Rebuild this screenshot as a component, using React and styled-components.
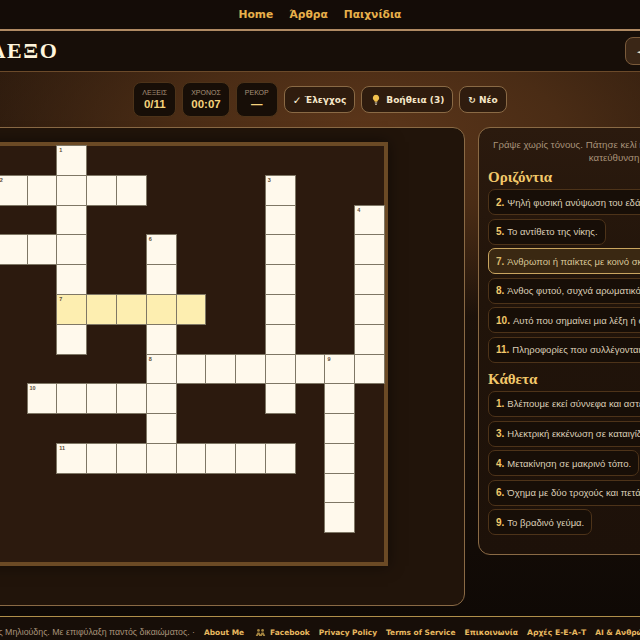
import React from 'react';
import styled, { createGlobalStyle } from 'styled-components';

const GlobalStyle = createGlobalStyle`
html, body { margin: 0; padding: 0; background: #140c07; overflow: hidden; }
body { width: 640px; height: 640px; font-family: "Liberation Sans", Arial, sans-serif; }
`

const ACROSS = [
    { n: 2, text: 'Ψηλή φυσική ανύψωση του εδάφους.' },
    { n: 5, text: 'Το αντίθετο της νίκης.' },
    { n: 7, text: 'Άνθρωποι ή παίκτες με κοινό σκοπό.', active: true },
    { n: 8, text: 'Άνθος φυτού, συχνά αρωματικό και πολύχρωμο.' },
    { n: 10, text: 'Αυτό που σημαίνει μια λέξη ή φράση στο λόγο.' },
    { n: 11, text: 'Πληροφορίες που συλλέγονται για ανάλυση.' },
]
const DOWN = [
    { n: 1, text: 'Βλέπουμε εκεί σύννεφα και αστέρια τη νύχτα.' },
    { n: 3, text: 'Ηλεκτρική εκκένωση σε καταιγίδα με βροντή.' },
    { n: 4, text: 'Μετακίνηση σε μακρινό τόπο.' },
    { n: 6, text: 'Όχημα με δύο τροχούς και πετάλια για βόλτα.' },
    { n: 9, text: 'Το βραδινό γεύμα.' },
]

// [row, startCol, length, horizontal?]
const WORDS = [
    [1, 1, 5, true],
    [3, 0, 4, true],
    [5, 3, 5, true],
    [7, 6, 8, true],
    [8, 2, 5, true],
    [10, 3, 8, true],
    [0, 3, 7, false],
    [1, 10, 8, false],
    [2, 13, 6, false],
    [3, 6, 7, false],
    [7, 12, 6, false],
]
const NUMBERS = { '0-3': 1, '1-1': 2, '1-10': 3, '2-13': 4, '3-0': 5, '3-6': 6, '5-3': 7, '7-6': 8, '7-12': 9, '8-2': 10, '10-3': 11 }

const cellSet = new Set()
WORDS.forEach(([r, c, len, horizontal]) => {
    for (let i = 0; i < len; i++) cellSet.add(horizontal ? `${r}-${c + i}` : `${r + i}-${c}`)
})
const cells = []
for (let r = 0; r < 14; r++) {
    for (let c = 0; c < 14; c++) {
        const key = `${r}-${c}`
        cells.push({ key, open: cellSet.has(key), num: NUMBERS[key], active: r === 5 && c >= 3 && c <= 7 })
    }
}

function App() {
    return (
        <Page>
            <GlobalStyle />
            <Nav>
                <NavLink>Home</NavLink>
                <NavLink>Άρθρα</NavLink>
                <NavLink>Παιχνίδια</NavLink>
            </Nav>
            <TitleBar>
                <Title>ΣΤΑΥΡΟΛΕΞΟ</Title>
                <BackButton>◄ Παιχνίδια</BackButton>
            </TitleBar>
            <Main>
                <Toolbar>
                    <Stat>
                        <StatLabel>ΛΕΞΕΙΣ</StatLabel>
                        <StatValue>0/11</StatValue>
                    </Stat>
                    <Stat>
                        <StatLabel>ΧΡΟΝΟΣ</StatLabel>
                        <StatValue>00:07</StatValue>
                    </Stat>
                    <Stat>
                        <StatLabel>ΡΕΚΟΡ</StatLabel>
                        <StatValue>—</StatValue>
                    </Stat>
                    <ToolButton><Mark>✓</Mark> Έλεγχος</ToolButton>
                    <ToolButton>
                        <Bulb viewBox="0 0 10 14">
                            <path d="M5 .5a4 4 0 0 1 2.400 7.200c-.5.4-.7.8-.8 1.500H3.400c-.1-.7-.3-1.100-.8-1.500A4 4 0 0 1 5 .5z" fill="#f2c14e" />
                            <rect x="3.500" y="10" width="3" height="1.200" fill="#d8cdb8" />
                            <rect x="3.900" y="11.800" width="2.200" height="1.200" fill="#d8cdb8" />
                        </Bulb>
                        Βοήθεια (3)
                    </ToolButton>
                    <ToolButton>↻ Νέο</ToolButton>
                </Toolbar>
                <Columns>
                    <BoardPanel>
                        <Board>
                            {cells.map(cell => (
                                <Cell key={cell.key} $open={cell.open} $active={cell.active}>
                                    {cell.num && <CellNum>{cell.num}</CellNum>}
                                </Cell>
                            ))}
                        </Board>
                    </BoardPanel>
                    <CluesPanel>
                        <Hint>Γράψε χωρίς τόνους. Πάτησε κελί ή Enter για να αλλάξεις κατεύθυνση.</Hint>
                        <ClueTitle>Οριζόντια</ClueTitle>
                        <ClueList>
                            {ACROSS.map(clue => (
                                <Clue key={clue.n} $active={clue.active}><b>{clue.n}.</b> {clue.text}</Clue>
                            ))}
                        </ClueList>
                        <ClueTitle>Κάθετα</ClueTitle>
                        <ClueList>
                            {DOWN.map(clue => (
                                <Clue key={clue.n}><b>{clue.n}.</b> {clue.text}</Clue>
                            ))}
                        </ClueList>
                    </CluesPanel>
                </Columns>
            </Main>
            <Footer>
                <span>© 2025 Γιώργος Μηλιούδης. Με επιφύλαξη παντός δικαιώματος. ·</span>
                <FootLink>About Me</FootLink>
                <FootLink>
                    <PeopleIcon viewBox="0 0 16 12">
                        <circle cx="5" cy="3" r="2" />
                        <circle cx="11" cy="3" r="2" />
                        <path d="M1 11l2.500-5h3L8 9l1.500-3h3L15 11h-3l-1-2-1 2H6L5 9l-1 2z" />
                    </PeopleIcon>
                    Facebook
                </FootLink>
                <FootLink>Privacy Policy</FootLink>
                <FootLink>Terms of Service</FootLink>
                <FootLink $greek>Επικοινωνία</FootLink>
                <FootLink $greek>Αρχές Ε-Ε-Α-Τ</FootLink>
                <FootLink>AI &amp; Ανθρώπινη Επιμέλεια</FootLink>
            </Footer>
        </Page>
    )
}

export default App

const Page = styled.div`
width: 866px;
margin-left: -113px;
`
const Nav = styled.nav`
height: 29px;
display: flex;
justify-content: center;
align-items: center;
gap: 16px;
background: #140c07;
border-bottom: 2px solid #b08a63;
`
const NavLink = styled.a`
font-family: "DejaVu Sans", sans-serif;
font-weight: 700;
font-size: 10.7px;
color: #e8b04b;
`
const TitleBar = styled.header`
height: 40px;
display: flex;
justify-content: space-between;
align-items: center;
padding: 0 12px 0 9px;
background: #170e08;
border-bottom: 1px solid #6b4a2a;
`
const Title = styled.h1`
margin: 0;
font-family: "Liberation Serif", serif;
font-weight: 700;
font-size: 22px;
letter-spacing: 1.5px;
color: #fff5dc;
`
const BackButton = styled.button`
min-width: 116px;
height: 28px;
padding: 0 11px;
text-align: left;
border: 1px solid #7a5a3a;
border-radius: 8px;
background: #3a2616;
color: #f5e6c8;
font-family: "DejaVu Sans", sans-serif;
font-weight: 700;
font-size: 11px;
`
const Main = styled.main`
background:
    radial-gradient(ellipse 430px 190px at 480px 60px, #5c361a 0%, #4a2c15 45%, rgba(42,25,13,0) 100%),
    linear-gradient(180deg, #2a190d 0%, #1a1009 55%, #0f0905 100%);
padding-bottom: 10px;
`
const Toolbar = styled.div`
height: 55px;
display: flex;
justify-content: center;
align-items: center;
gap: 6px;
`
const Stat = styled.div`
height: 35px;
box-sizing: border-box;
padding: 0 8px;
display: flex;
flex-direction: column;
align-items: center;
justify-content: center;
gap: 2px;
background: #170e07;
border: 1px solid #4d3319;
border-radius: 8px;
`
const StatLabel = styled.span`
font-size: 7px;
color: #a8937a;
`
const StatValue = styled.span`
font-size: 11.5px;
font-weight: 700;
color: #f5d37c;
`
const ToolButton = styled.button`
height: 27px;
padding: 0 8px;
display: flex;
align-items: center;
gap: 3px;
background: #2f1c0e;
border: 1px solid #8a6a45;
border-radius: 8px;
color: #f5e6c8;
font-family: "DejaVu Sans", sans-serif;
font-weight: 700;
font-size: 9px;
`
const Mark = styled.span`
font-size: 10.5px;
color: #fff5dc;
`
const Bulb = styled.svg`
width: 8px;
height: 12px;
margin: 0 3px 0 2px;
`
const Columns = styled.div`
display: flex;
align-items: flex-start;
gap: 13px;
`
const BoardPanel = styled.section`
width: 578px;
height: 479px;
box-sizing: border-box;
padding-top: 14px;
display: flex;
justify-content: center;
background: #21140a;
border: 1px solid #8a6a45;
border-radius: 12px;
`
const Board = styled.div`
width: 416px;
height: 416px;
display: grid;
grid-template-columns: repeat(14, 1fr);
grid-template-rows: repeat(14, 1fr);
gap: 1px;
background: #2c1a0e;
border: 4px solid #6b4a25;
box-shadow: 0 0 14px rgba(0,0,0,0.5);
`
const Cell = styled.div`
position: relative;
background: ${p => (p.$active ? '#fdeeb0' : p.$open ? '#fff9ec' : 'transparent')};
outline: ${p => (p.$open ? '1px solid #7f7765' : 'none')};
`
const CellNum = styled.span`
position: absolute;
top: 1px;
left: 2px;
font-size: 5.5px;
font-weight: 700;
color: #5a4a36;
`
const CluesPanel = styled.aside`
width: 275px;
height: 428px;
box-sizing: border-box;
padding: 11px 9px;
background: linear-gradient(180deg, #2b1a0e 0%, #21140a 40%, #1d1109 100%);
border: 1px solid #8a6a45;
border-radius: 12px;
`
const Hint = styled.p`
margin: 0 0 4px;
font-size: 9.7px;
line-height: 12.5px;
color: #a8937a;
text-align: center;
`
const ClueTitle = styled.h2`
margin: 0 0 3px;
font-family: "Liberation Serif", serif;
font-weight: 700;
font-size: 15px;
line-height: 18px;
color: #f2c86a;
`
const ClueList = styled.div`
display: flex;
flex-direction: column;
align-items: flex-start;
gap: 3.6px;
margin-bottom: 7px;
`
const Clue = styled.div`
height: 26px;
display: flex;
align-items: center;
gap: 3px;
box-sizing: border-box;
padding: 0 7px;
white-space: nowrap;
font-size: 9.5px;
color: ${p => (p.$active ? '#d9c798' : '#dccfb8')};
background: ${p => (p.$active ? '#3a2812' : '#170e07')};
border: 1px solid ${p => (p.$active ? '#c9a560' : '#4d3319')};
border-radius: 7px;
b { color: ${p => (p.$active ? '#d9b96c' : '#f2c86a')}; font-size: 10px; }
`
const Footer = styled.footer`
height: 31px;
box-sizing: border-box;
padding-left: 5px;
display: flex;
justify-content: center;
align-items: center;
gap: 9px;
white-space: nowrap;
background: #170e08;
border-top: 1px solid #b08f4a;
font-size: 8.8px;
color: #a8937a;
`
const FootLink = styled.a`
display: flex;
align-items: center;
gap: 4px;
font-family: "DejaVu Sans", sans-serif;
font-weight: 700;
font-size: ${p => (p.$greek ? '7.7px' : '7.45px')};
color: #e8b960;
`
const PeopleIcon = styled.svg`
width: 11px;
height: 9px;
margin-left: 2px;
fill: #a58540;
`
